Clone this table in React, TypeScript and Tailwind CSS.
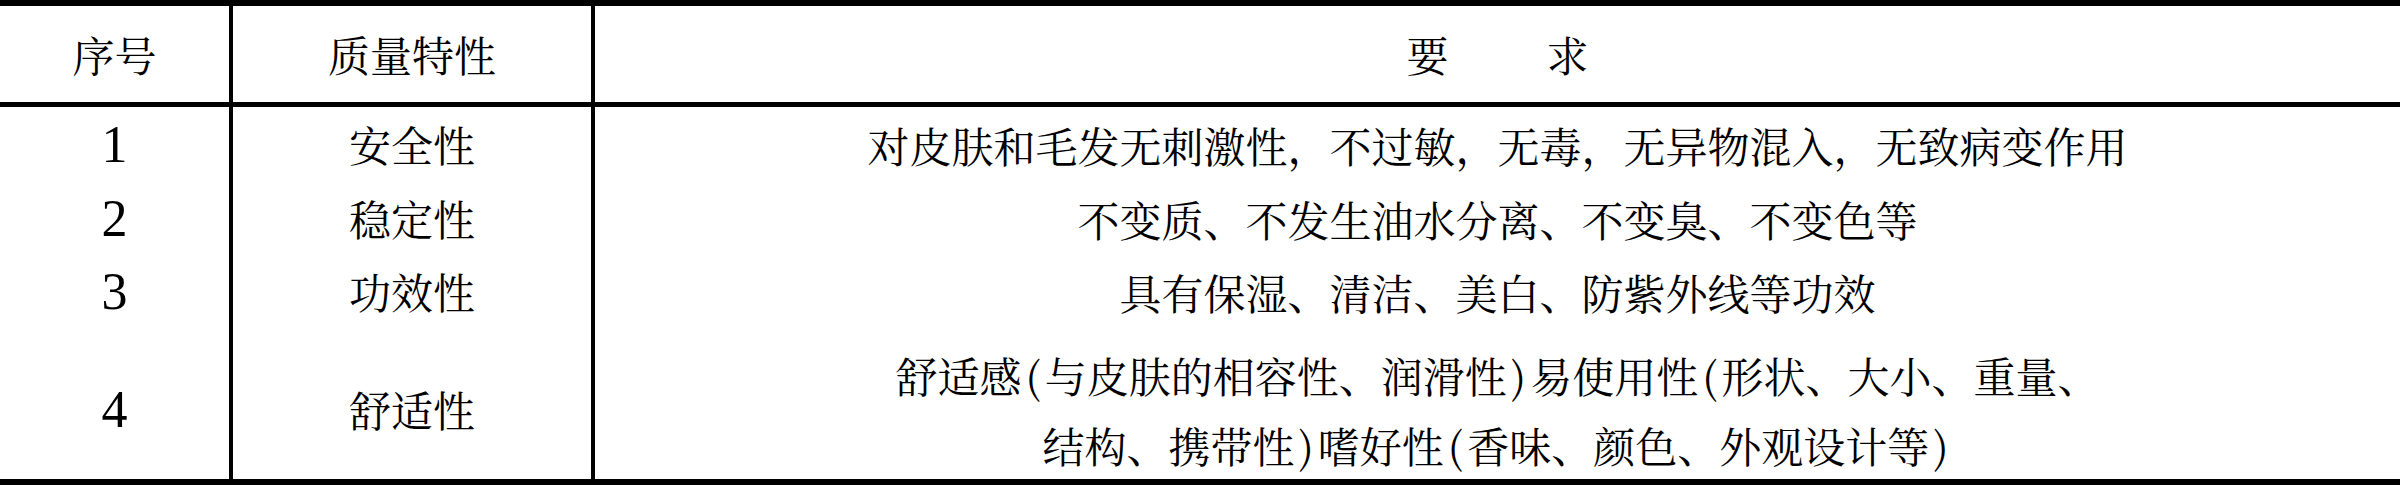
import type { ReactNode } from 'react';

const P = ({ c }: { c: string }) => <span className="mx-[4px]">{c}</span>;

const rows: { no: string; name: string; req: ReactNode[]; h: string }[] = [
  { no: '1', name: '安全性', req: ['对皮肤和毛发无刺激性，不过敏，无毒，无异物混入，无致病变作用'], h: 'h-[75px]' },
  { no: '2', name: '稳定性', req: ['不变质、不发生油水分离、不变臭、不变色等'], h: 'h-[73px]' },
  { no: '3', name: '功效性', req: ['具有保湿、清洁、美白、防紫外线等功效'], h: 'h-[73px]' },
  {
    no: '4',
    name: '舒适性',
    req: [
      <>
        舒适感<P c="(" />与皮肤的相容性、润滑性<P c=")" />易使用性<P c="(" />形状、大小、重量、
      </>,
      <>
        结构、携带性<P c=")" />嗜好性<P c="(" />香味、颜色、外观设计等<P c=")" />
      </>,
    ],
    h: 'h-[151px] pt-[12px]',
  },
];

// Song-style face if the box has one, otherwise the installed sans CJK
const cjk = "font-['Noto_Serif_CJK_SC','Noto_Sans_CJK_SC',serif]";
const num = "font-['Liberation_Serif','Times_New_Roman',serif]";

export default function App() {
  return (
    <div className="w-[2400px] h-[485px] bg-white text-black">
      <div className={`grid grid-cols-[233px_362px_1fr] border-t-[6px] border-b-[6px] border-black ${cjk} text-[42px]`}>
        <div className="h-[101px] border-b-[5px] border-r-4 border-black flex items-center justify-center">序号</div>
        <div className="h-[101px] border-b-[5px] border-r-4 border-black flex items-center justify-center">质量特性</div>
        <div className="h-[101px] border-b-[5px] border-black flex items-center justify-center gap-[98px]">
          <span>要</span>
          <span>求</span>
        </div>

        {rows.map((r) => (
          <Row key={r.no} {...r} />
        ))}
      </div>
    </div>
  );
}

function Row({ no, name, req, h }: { no: string; name: string; req: ReactNode[]; h: string }) {
  return (
    <>
      <div className={`${h} border-r-4 border-black flex items-center justify-center ${num} text-[52px]`}>{no}</div>
      <div className={`${h} border-r-4 border-black flex items-center justify-center`}>{name}</div>
      <div className={`${h} flex flex-col items-center justify-center leading-[70px]`}>
        {req.map((line, i) => (
          <div key={i}>{line}</div>
        ))}
      </div>
    </>
  );
}
